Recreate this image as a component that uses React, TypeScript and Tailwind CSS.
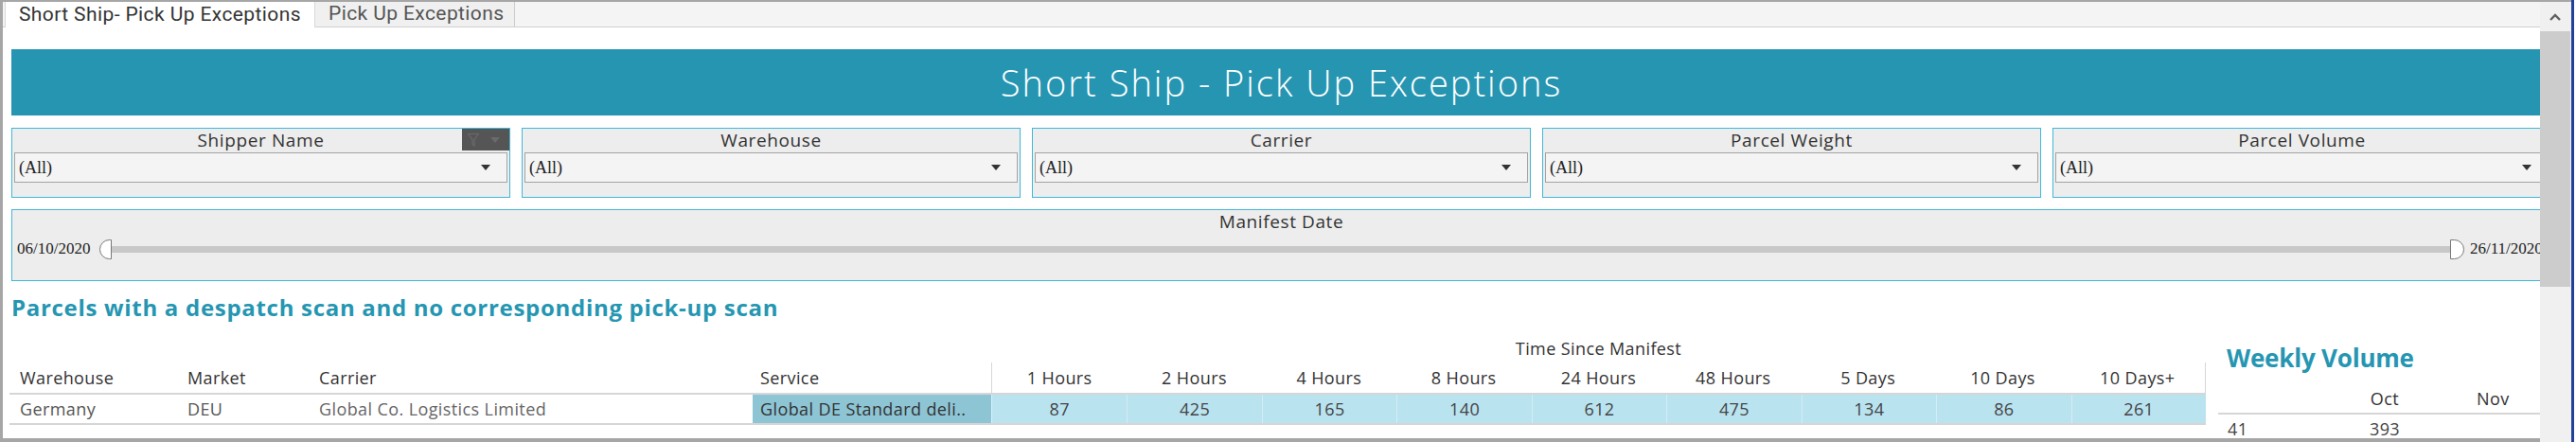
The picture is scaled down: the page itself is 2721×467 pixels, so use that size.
const FILTERS = ["Shipper Name", "Warehouse", "Carrier", "Parcel Weight", "Parcel Volume"];

const TIME_COLS = [
  { label: "1 Hours", value: 87 },
  { label: "2 Hours", value: 425 },
  { label: "4 Hours", value: 165 },
  { label: "8 Hours", value: 140 },
  { label: "24 Hours", value: 612 },
  { label: "48 Hours", value: 475 },
  { label: "5 Days", value: 134 },
  { label: "10 Days", value: 86 },
  { label: "10 Days+", value: 261 },
];

function Caret() {
  return (
    <svg width="10" height="6" viewBox="0 0 10 6" className="shrink-0">
      <path d="M0 0 H10 L5 6 Z" fill="#333" />
    </svg>
  );
}

function FilterBox({ title, withMenu }: { title: string; withMenu?: boolean }) {
  return (
    <div className="relative w-[527px] h-[74px] shrink-0 border border-[#40b8da] bg-[#ededed] px-[2px] flex flex-col">
      {withMenu && (
        <div className="absolute top-0 right-0 w-[50px] h-[23px] bg-[#555555] flex items-center pl-[6px] gap-[12px]">
          {/* funnel */}
          <svg width="12" height="14" viewBox="0 0 12 14">
            <path d="M0.5 0.5 H11.5 L7 6.5 V13 L5 11.5 V6.5 Z" fill="none" stroke="#6a6a6a" strokeWidth="1.2" />
          </svg>
          <svg width="10" height="6" viewBox="0 0 10 6">
            <path d="M0 0 H10 L5 6 Z" fill="#6a6a6a" />
          </svg>
        </div>
      )}
      <div className="h-[25px] flex items-center justify-center text-[19px] tracking-[0.6px] text-[#333] font-['Open_Sans',sans-serif]">
        {title}
      </div>
      <div className="h-[32px] border border-[#a3a3a3] bg-[#f4f4f4] flex items-center justify-between pl-[4px] pr-[17px]">
        <span className="text-[18px] text-[#222] font-['Liberation_Serif',serif]">(All)</span>
        <Caret />
      </div>
    </div>
  );
}

function DateSlider() {
  return (
    <div className="w-[2683px] h-[76px] shrink-0 ml-[2px] border border-[#40b8da] bg-[#ededed] flex flex-col">
      <div className="h-[23px] mt-[1px] flex items-center justify-center text-[19px] tracking-[0.6px] text-[#333] font-['Open_Sans',sans-serif]">
        Manifest Date
      </div>
      <div className="flex items-center mt-[6px] pl-[5px] pr-[5px] h-[22px] font-['Liberation_Serif',serif] text-[17px] text-[#222]">
        <span className="w-[80px] shrink-0">06/10/2020</span>
        <div className="ml-[7px] w-[13px] h-[21px] shrink-0 bg-white border border-[#777] rounded-l-full" />
        <div className="flex-1 h-[7px] bg-[#c8c8c8]" />
        <div className="w-[15px] h-[21px] shrink-0 bg-white border border-[#777] rounded-r-full" />
        <span className="ml-[6px] w-[80px] shrink-0">26/11/2020</span>
      </div>
    </div>
  );
}

function ResultsTable() {
  return (
    <div className="w-[2320px] shrink-0 flex flex-col font-['Open_Sans',sans-serif] text-[18px] tracking-[0.4px]">
      {/* super header */}
      <div className="h-[38px] flex items-end pb-[4px]">
        <div className="w-[1037px] shrink-0" />
        <div className="w-[1283px] text-center leading-[22px] text-[#333]">Time Since Manifest</div>
      </div>
      {/* header row */}
      <div className="h-[34px] flex border-b-2 border-[#d6d6d6] text-[#333]">
        <div className="w-[178px] pl-[11px] flex items-center">Warehouse</div>
        <div className="w-[141px] pl-[10px] flex items-center">Market</div>
        <div className="w-[466px] pl-[8px] flex items-center">Carrier</div>
        <div className="w-[252px] pl-[8px] flex items-center">Service</div>
        <div className="w-[1283px] border-x border-[#d6d6d6] grid grid-cols-9">
          {TIME_COLS.map((c) => (
            <div key={c.label} className="flex items-center justify-center">
              {c.label}
            </div>
          ))}
        </div>
      </div>
      {/* data row */}
      <div className="h-[32px] flex border-b-2 border-[#d6d6d6] text-[#555]">
        <div className="w-[178px] pl-[11px] flex items-center">Germany</div>
        <div className="w-[141px] pl-[10px] flex items-center">DEU</div>
        <div className="w-[466px] pl-[8px] flex items-center text-[#666]">Global Co. Logistics Limited</div>
        <div className="w-[252px] pl-[8px] flex items-center bg-[#8dc5d5] text-[#333] whitespace-nowrap overflow-hidden">
          Global DE Standard deli..
        </div>
        <div className="w-[1283px] border-l border-[#d9eff7] grid grid-cols-9 bg-[#bae3f0]">
          {TIME_COLS.map((c, i) => (
            <div
              key={c.label}
              className={`flex items-center justify-center text-[#444] ${i > 0 ? "border-l border-[#d3edf6]" : ""}`}
            >
              {c.value}
            </div>
          ))}
        </div>
      </div>
    </div>
  );
}

function WeeklyVolume() {
  return (
    <div className="w-[345px] shrink-0 ml-[13px] flex flex-col font-['Open_Sans',sans-serif] text-[18px] tracking-[0.4px]">
      <div className="mt-[17px] h-[32px] pl-[9px] flex items-center text-[26px] font-bold text-[#2596b2] tracking-[-0.2px]">
        Weekly Volume
      </div>
      <div className="mt-[12px] h-[32px] flex border-b-2 border-[#d6d6d6] text-[#333]">
        <div className="w-[117px]" />
        <div className="w-[120px] flex items-center justify-center">Oct</div>
        <div className="w-[110px] flex items-center justify-center">Nov</div>
      </div>
      <div className="h-[30px] flex text-[#444]">
        <div className="w-[117px] pl-[10px] flex items-center">41</div>
        <div className="w-[120px] flex items-center justify-center">393</div>
        <div className="w-[110px]" />
      </div>
    </div>
  );
}

function Scrollbar() {
  return (
    <div className="w-[32px] shrink-0 flex flex-col bg-[#f0f0f0]">
      <div className="h-[31px] flex items-center justify-center">
        <svg width="12" height="8" viewBox="0 0 12 8">
          <polyline points="1,7 6,2 11,7" fill="none" stroke="#606060" strokeWidth="2.4" />
        </svg>
      </div>
      <div className="h-[270px] bg-[#cccccc]" />
      <div className="flex-1" />
    </div>
  );
}

export default function App() {
  return (
    <div className="w-[2721px] h-[467px] flex bg-white overflow-hidden">
      <div className="w-[2716px] flex flex-col border-t-2 border-[#a6a6a6]">
        <div className="flex flex-1 min-h-0">
          {/* dashboard */}
          <div className="w-[2683px] shrink-0 border-l-[3px] border-b-4 border-[#a6a6a6] overflow-hidden flex flex-col">
            {/* tabs */}
            <div className="h-[27px] shrink-0 flex bg-[#f4f4f4] border-b border-[#d0d0d0] font-['Roboto',sans-serif] text-[21px] tracking-[0.4px]">
              <div className="ml-[2px] w-[328px] h-[27px] bg-white border-x border-[#d8d8d8] pl-[14px] flex items-center text-[#333] whitespace-nowrap">
                Short Ship- Pick Up Exceptions
              </div>
              <div className="w-[211px] bg-[#f0f0f0] border-r border-[#cccccc] pl-[14px] flex items-center text-[#555] whitespace-nowrap">
                Pick Up Exceptions
              </div>
            </div>

            {/* body */}
            <div className="flex-1 min-h-0 pl-[7px] flex flex-col">
              <div className="mt-[23px] ml-[2px] w-[2683px] h-[70px] shrink-0 bg-[#2695b1] flex items-center justify-center text-white text-[38px] tracking-[2px] font-light font-['Open_Sans',sans-serif]">
                Short Ship - Pick Up Exceptions
              </div>

              <div className="mt-[13px] ml-[2px] flex gap-[12px]">
                {FILTERS.map((f, i) => (
                  <FilterBox key={f} title={f} withMenu={i === 0} />
                ))}
              </div>

              <div className="mt-[12px] flex">
                <DateSlider />
              </div>

              <div className="mt-[12px] ml-[2px] h-[32px] shrink-0 flex items-center text-[24px] font-bold tracking-[0.7px] text-[#2596b2] font-['Open_Sans',sans-serif] whitespace-nowrap">
                Parcels with a despatch scan and no corresponding pick-up scan
              </div>

              <div className="mt-[4px] flex">
                <ResultsTable />
                <WeeklyVolume />
              </div>
            </div>
          </div>

          <Scrollbar />
          <div className="w-px bg-[#f0f0f0]" />
        </div>
      </div>
      <div className="w-[3px] bg-[#21409a]" />
      <div className="w-[2px] bg-white" />
    </div>
  );
}
